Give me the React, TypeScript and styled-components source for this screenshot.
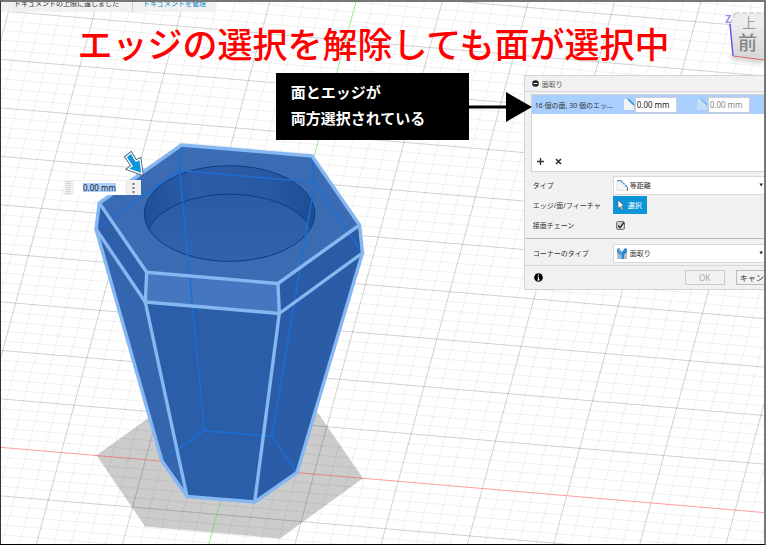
import React, { useState } from "react";
import styled, { createGlobalStyle } from "styled-components";

const CJK = `"Noto Sans", "Noto Sans CJK JP", sans-serif`;
const CJK_ONLY = `"Noto Sans CJK JP", sans-serif`;

const GlobalStyle = createGlobalStyle`
  *, *::before, *::after { box-sizing: border-box; }
  body { margin: 0; font-family: ${CJK}; font-size: 7px; color: #333; }
  button, input, select { font: inherit; color: inherit; margin: 0; }
`;

const Frame = styled.main`
  position: relative;
  min-height: 100vh;
  overflow: hidden;
  background: #fff;
  border: 2px solid #777;
  border-left: 1px solid #333;
  border-bottom: 1px solid #000;
`;

const Scene = styled.svg`
  position: absolute;
  inset: 0;
  width: 100%;
  height: 100%;
  display: block;
`;

const Content = styled.div`
  position: relative;
  display: flex;
  flex-direction: column;
`;

const NoticeBar = styled.div`
  display: flex;
  align-self: flex-start;
  height: 10px;
  background: #f1f1f1;
  overflow: hidden;
  line-height: 10px;
`;

const Notice = styled.span`
  display: block;
  margin-top: -3px;
  padding: 0 13px;
  border-right: 1px solid #ccc;
  white-space: nowrap;
`;

const NoticeLink = styled.a`
  display: block;
  margin-top: -3px;
  padding: 0 10px;
  color: #0a84c8;
  text-decoration: none;
  white-space: nowrap;
`;

const Headline = styled.h1`
  margin: 5px 18px 4px 0;
  font: 500 35px/52px ${CJK_ONLY};
  color: #f00;
  text-align: center;
  white-space: nowrap;
`;

const Row = styled.div`
  display: flex;
  align-items: flex-start;
  padding-left: 36%;
`;

const Callout = styled.p`
  flex: 0 0 193px;
  margin: 0;
  padding: 6px 15px 9px;
  background: #000;
  color: #fff;
  font: 700 15px/26px ${CJK_ONLY};
`;

const Pointer = styled.svg`
  flex: none;
  position: relative;
  z-index: 1;
  margin: 18px -8px 0 0;
`;

const Panel = styled.form`
  flex: 0 0 264px;
  margin-top: 2px;
  background: #f1f1f1;
  border: 1px solid #d4d4d4;
`;

const PanelHeader = styled.header`
  display: flex;
  align-items: center;
  gap: 3px;
  height: 16px;
  padding-left: 7px;
  border-bottom: 1px solid #d8d8d8;
  color: #555;
`;

const PanelTitle = styled.h2`
  margin: 0;
  font: inherit;
`;

const SelectionList = styled.div`
  display: flex;
  flex-direction: column;
  justify-content: space-between;
  height: 78px;
  margin: 2px 0 3px 6px;
  border: 1px solid #d4d4d4;
  background: #fff;
`;

const SelectionRow = styled.div`
  display: flex;
  align-items: center;
  height: 19px;
  padding-left: 3px;
  background: #a9cfff;
`;

const SelectionText = styled.span`
  flex: 0 0 88px;
  white-space: nowrap;
`;

const Distance = styled.label<{ $muted?: boolean }>`
  display: flex;
  align-items: center;
  flex: 0 0 73px;
  color: ${(p) => (p.$muted ? "#888" : "#222")};
  svg { opacity: ${(p) => (p.$muted ? 0.4 : 1)}; }
`;

const DistanceInput = styled.input`
  width: 42px;
  height: 16px;
  padding: 0 0 0 1px;
  border: 1px solid #cfcfcf;
  background: #fff;
  font-size: 8px;
`;

const ListTools = styled.div`
  display: flex;
  gap: 8px;
  padding: 0 4px 4px;
`;

const ToolButton = styled.button`
  display: grid;
  place-items: center;
  width: 10px;
  height: 11px;
  padding: 0;
  border: 0;
  background: none;
`;

const Field = styled.div`
  display: grid;
  grid-template-columns: 80px 1fr;
  align-items: center;
  height: 20px;
  padding-left: 8px;
`;

const FieldLabel = styled.label`
  white-space: nowrap;
`;

const Choice = styled.div`
  display: flex;
  align-items: center;
  width: 156px;
  height: 19px;
  padding: 0 4px 0 2px;
  border: 1px solid #d8d8d8;
  background: #fff;
`;

const ChoiceSelect = styled.select`
  flex: 1;
  height: 17px;
  padding: 0 0 0 2px;
  border: 0;
  outline: 0;
  appearance: none;
  background: none;
`;

const SelectButton = styled.button`
  display: flex;
  align-items: center;
  gap: 3px;
  width: 34px;
  height: 18px;
  padding: 0 4px;
  border: 0;
  background: #0c96d8;
  color: #fff;
`;

const TickBox = styled.span`
  display: grid;
  justify-content: start;
  align-items: center;
  > * { grid-area: 1 / 1; }
  svg { margin-left: 3px; pointer-events: none; }
`;

const Tick = styled.input`
  appearance: none;
  width: 9px;
  height: 9px;
  margin: 0 0 0 3px;
  border: 1px solid #777;
  border-radius: 2px;
  background: #d0d0d0;
`;

const Divider = styled.hr`
  margin: 3px 0 4px;
  border: 0;
  border-top: 1px solid #bbb;
`;

const PanelFooter = styled.footer`
  display: flex;
  align-items: center;
  gap: 11px;
  height: 24px;
  margin-top: 2px;
  padding-left: 9px;
  border-top: 1px solid #d8d8d8;
`;

const FooterButton = styled.button`
  flex: none;
  min-width: 40px;
  height: 15px;
  padding: 0 3px;
  border: 1px solid #bbb;
  background: #f1f1f1;
  font-size: 8px;
  line-height: 12px;
  white-space: nowrap;
  &:disabled { color: #aaa; border-color: #ccc; }
  &:first-of-type { margin-left: 131px; }
`;

const ValueEditor = styled.div`
  position: absolute;
  left: 63px;
  top: 178px;
  display: flex;
  align-items: center;
  height: 15px;
  background: #f0f0f0;
`;

const Grip = styled.span`
  width: 5px;
  height: 13px;
  margin: 0 3px 0 2px;
  background: repeating-linear-gradient(#d4d4d4 0 1px, #f0f0f0 1px 2px);
`;

const ValueBox = styled.span`
  display: flex;
  align-items: center;
  width: 51px;
  height: 14px;
  padding-left: 9px;
  background: #fff;
`;

const ValueInput = styled.input`
  width: 33px;
  height: 9px;
  padding: 0;
  border: 0;
  outline: 0;
  background: #a9cfff;
  color: #222;
  font-size: 8px;
  line-height: 9px;
`;

const MoreButton = styled.button`
  display: grid;
  place-items: center;
  width: 16px;
  height: 15px;
  padding: 0;
  border: 0;
  background: none;
`;

const ViewCube = styled.svg`
  position: absolute;
  top: 8px;
  right: 0;
`;

type Pt = [number, number];
const pts = (...list: Pt[]) => list.map((p) => p.join(",")).join(" ");

const SLOPE_H = 0.0854;
const SLOPE_V = -0.2715;

function Grid() {
  const lines: React.ReactElement[] = [];
  for (let i = -58; i <= 20; i++) {
    if (i === 0) continue;
    const y = 447.3 + i * 9.7;
    lines.push(
      <line key={`h${i}`} x1={0} y1={y} x2={1600} y2={y + 1600 * SLOPE_H}
        strokeOpacity={i % 5 === 0 ? 0.18 : 0.06} />
    );
  }
  for (let i = -22; i <= 90; i++) {
    if (i === 0) continue;
    const x = 356.5 + i * 17.24;
    lines.push(
      <line key={`v${i}`} x1={x} y1={0} x2={x + 800 * SLOPE_V} y2={800}
        strokeOpacity={i % 5 === 0 ? 0.18 : 0.06} />
    );
  }
  return (
    <g strokeWidth="1" stroke="#000">
      {lines}
      <line x1={0} y1={447.3} x2={1600} y2={447.3 + 1600 * SLOPE_H} stroke="#ff3b3b" strokeOpacity="0.5" />
      <line x1={356.5} y1={0} x2={356.5 + 800 * SLOPE_V} y2={800} stroke="#4fe04f" strokeOpacity="0.6" />
    </g>
  );
}

const A: Pt = [181.5, 145];
const B: Pt = [312, 156];
const C: Pt = [359.5, 225];
const D: Pt = [278, 283.5];
const E: Pt = [146.7, 272.3];
const F: Pt = [99.3, 203];
const C2: Pt = [362.5, 253];
const D2: Pt = [279.3, 313.5];
const E2: Pt = [145.3, 302];
const F2: Pt = [96, 229];
const A2: Pt = [179.7, 170.5];
const B2: Pt = [314.7, 182.3];
const a: Pt = [204.3, 430.7];
const b: Pt = [272, 436.3];
const c: Pt = [297, 472.5];
const d: Pt = [254.7, 502];
const e: Pt = [187, 496.5];
const f: Pt = [162, 461];

function Model() {
  return (
    <Scene viewBox="1 2 763 542" preserveAspectRatio="xMinYMin slice" aria-hidden="true">
      <defs>
        <linearGradient id="wall" x1="0" x2="1" y1="0" y2="0">
          <stop offset="0" stopColor="#1d4e97" />
          <stop offset="0.3" stopColor="#2d5da8" />
          <stop offset="0.7" stopColor="#2a59a3" />
          <stop offset="1" stopColor="#1c4c94" />
        </linearGradient>
        <linearGradient id="floor" x1="0" x2="0" y1="0" y2="1">
          <stop offset="0" stopColor="#2b5ba6" />
          <stop offset="1" stopColor="#3565b0" />
        </linearGradient>
        <clipPath id="hole">
          <ellipse cx="229.5" cy="213.5" rx="85.2" ry="47.8" />
        </clipPath>
      </defs>
      <polygon points={pts([96.5, 455.3], [145, 526.5], [280, 538.5], [363, 478.3], [317, 411.5], [300, 400], [175, 399])} fill="#ccc" />
      <Grid />
      <g>
        <polygon points={pts(A, B, C, D, E, F)} fill="#3a6bb3" />
        <polygon points={pts(F, E, E2, F2)} fill="#2f5fa9" />
        <polygon points={pts(E, D, D2, E2)} fill="#4576c0" />
        <polygon points={pts(D, C, C2, D2)} fill="#2b5ba6" />
        <polygon points={pts(F2, E2, e, f)} fill="#3465af" />
        <polygon points={pts(E2, D2, d, e)} fill="#2b5ea9" />
        <polygon points={pts(D2, C2, c, d)} fill="#2a5ca7" />
      </g>
      <g clipPath="url(#hole)">
        <rect x="140" y="160" width="180" height="105" fill="url(#wall)" />
        <ellipse cx="230" cy="240.5" rx="84" ry="46.3" fill="url(#floor)" stroke="#123b7d" />
      </g>
      <ellipse cx="229.5" cy="213.5" rx="85.2" ry="47.8" fill="none" stroke="#123b7d" />
      <g fill="none" stroke="#1a6fd6" strokeWidth="1.4">
        <polyline points={pts(A, A2, a)} />
        <polyline points={pts(B, B2, b)} />
        <polyline points={pts(F2, A2, B2, C2)} />
        <polyline points={pts(f, a, b, c)} />
      </g>
      <g fill="none" stroke="#86b7f0" strokeWidth="3.4" strokeLinejoin="round" strokeLinecap="round">
        <polygon points={pts(A, B, C, C2, c, d, e, f, F2, F)} />
        <polyline points={pts(F, E, D, C)} />
        <polyline points={pts(F2, E2, D2, C2)} />
        <polyline points={pts(E, E2, e)} />
        <polyline points={pts(D, D2, d)} />
      </g>
      <path d="M126 157l5-4 5 8 4-2 2 15-14-5 4-3z" fill="#0d96dc" stroke="#34516f" strokeWidth="3" />
      <path d="M126 157l5-4 5 8 4-2 2 15-14-5 4-3z" fill="#0d96dc" stroke="#fff" strokeWidth="1.4" />
    </Scene>
  );
}

const BevelIcon = () => (
  <svg width="12" height="13" viewBox="0 0 12 13" aria-hidden="true">
    <path d="M1 1h5l5 6v5H1z" fill="#f3f3f3" />
    <path d="M5 1l6 6" stroke="#2b8fe0" strokeWidth="1.5" />
  </svg>
);

const DistanceIcon = () => (
  <svg width="12" height="13" viewBox="0 0 12 13" aria-hidden="true">
    <path d="M1 2v9.5h10V7.5L5 2z" fill="#f6f6f6" stroke="#e0e0e0" />
    <path d="M1 1.5h4M11.500 8v4" stroke="#777" />
    <path d="M5 2l6 6" stroke="#2b8fe0" strokeWidth="1.4" strokeDasharray="2 1" />
  </svg>
);

const CornerIcon = () => (
  <svg width="12" height="13" viewBox="0 0 12 13" aria-hidden="true">
    <path d="M1 5l3 3v4H1zM11 5L8 8v4h3z" fill="#bdbdbd" />
    <path d="M1 2l2-1 3 4 3-4 2 1v3L8 8v4H4V8L1 5z" fill="#2d86c8" />
    <path d="M1 2l2-1 3 4-1 2zM4 7h2v5H4z" fill="#6ab5e8" />
  </svg>
);

const Caret = () => (
  <svg width="5" height="4" viewBox="0 0 5 4" aria-hidden="true">
    <path d="M0.500 0.500h3.500L2.200 3.500z" fill="#222" />
  </svg>
);

export default function App() {
  const [tangent, setTangent] = useState(true);
  return (
    <>
      <GlobalStyle />
      <Frame>
        <Model />
        <Content>
          <NoticeBar>
            <Notice>ドキュメントの上限に達しました</Notice>
            <NoticeLink href="#documents">ドキュメントを管理</NoticeLink>
          </NoticeBar>
          <Headline>エッジの選択を解除しても面が選択中</Headline>
          <Row>
            <Callout>
              面とエッジが
              <br />
              両方選択されている
            </Callout>
            <Pointer width="63" height="32" viewBox="0 0 63 32" aria-hidden="true">
              <path d="M0 16h40" stroke="#000" strokeWidth="3" />
              <path d="M37 1l26 15-26 15z" />
            </Pointer>
            <Panel onSubmit={(ev) => ev.preventDefault()}>
              <PanelHeader>
                <svg width="7" height="7" viewBox="0 0 7 7" aria-hidden="true">
                  <circle cx="3.5" cy="3.5" r="3.3" fill="#222" />
                  <path d="M1.500 3.500h4" stroke="#fff" />
                </svg>
                <PanelTitle>面取り</PanelTitle>
              </PanelHeader>
              <SelectionList>
                <SelectionRow>
                  <SelectionText>16 個の面, 30 個のエッ...</SelectionText>
                  <Distance>
                    <BevelIcon />
                    <DistanceInput aria-label="距離 1" defaultValue="0.00 mm" />
                  </Distance>
                  <Distance $muted>
                    <BevelIcon />
                    <DistanceInput aria-label="距離 2" defaultValue="0.00 mm" readOnly />
                  </Distance>
                </SelectionRow>
                <ListTools>
                  <ToolButton type="button" aria-label="追加">
                    <svg width="7" height="7" viewBox="0 0 7 7"><path d="M3.500 0v7M0 3.500h7" stroke="#333" strokeWidth="1.4" /></svg>
                  </ToolButton>
                  <ToolButton type="button" aria-label="削除">
                    <svg width="7" height="7" viewBox="0 0 7 7"><path d="M1 1l5 5M6 1L1 6" stroke="#333" strokeWidth="1.6" /></svg>
                  </ToolButton>
                </ListTools>
              </SelectionList>
              <Field>
                <FieldLabel htmlFor="type">タイプ</FieldLabel>
                <Choice>
                  <DistanceIcon />
                  <ChoiceSelect id="type"><option>等距離</option></ChoiceSelect>
                  <Caret />
                </Choice>
              </Field>
              <Field>
                <FieldLabel htmlFor="pick">エッジ/面/フィーチャ</FieldLabel>
                <SelectButton id="pick" type="button">
                  <svg width="8" height="10" viewBox="0 0 8 10" aria-hidden="true">
                    <path d="M1 0l6 6H4.500L6 9l-1.500.700L3.200 6.800 1 8.500z" fill="#fff" stroke="#555" strokeWidth=".6" />
                  </svg>
                  選択
                </SelectButton>
              </Field>
              <Field>
                <FieldLabel htmlFor="tangent">接面チェーン</FieldLabel>
                <TickBox>
                  <Tick id="tangent" type="checkbox" checked={tangent} onChange={(ev) => setTangent(ev.target.checked)} />
                  {tangent && (
                    <svg width="9" height="9" viewBox="0 0 9 9" aria-hidden="true">
                      <path d="M2 4.500l2 2.300L7.800 1.500" fill="none" stroke="#222" strokeWidth="1.3" />
                    </svg>
                  )}
                </TickBox>
              </Field>
              <Divider />
              <Field>
                <FieldLabel htmlFor="corner">コーナーのタイプ</FieldLabel>
                <Choice>
                  <CornerIcon />
                  <ChoiceSelect id="corner"><option>面取り</option></ChoiceSelect>
                  <Caret />
                </Choice>
              </Field>
              <PanelFooter>
                <svg width="9" height="9" viewBox="0 0 9 9" aria-hidden="true">
                  <circle cx="4.5" cy="4.5" r="4.3" fill="#000" />
                  <path d="M4.500 1.500v1.300M3.500 4h1v3M3.300 7h2.600" stroke="#fff" fill="none" />
                </svg>
                <FooterButton type="submit" disabled>OK</FooterButton>
                <FooterButton type="button">キャンセル</FooterButton>
              </PanelFooter>
            </Panel>
          </Row>
        </Content>
        <ValueEditor>
          <Grip />
          <ValueBox>
            <ValueInput aria-label="面取り距離" defaultValue="0.00 mm" />
          </ValueBox>
          <MoreButton type="button" aria-label="その他">
            <svg width="3" height="10" viewBox="0 0 3 10" fill="#777">
              <rect x=".5" y="0" width="2" height="2" />
              <rect x=".5" y="4" width="2" height="2" />
              <rect x=".5" y="8" width="2" height="2" />
            </svg>
          </MoreButton>
        </ValueEditor>
        <ViewCube width="42" height="56" viewBox="722 10 42 56" fontFamily="Noto Sans CJK JP, sans-serif" role="img" aria-label="ビューキューブ">
          <defs>
            <linearGradient id="face" x1="0" x2="0" y1="0" y2="1">
              <stop offset="0" stopColor="#ececec" />
              <stop offset="1" stopColor="#d6d6d6" />
            </linearGradient>
            <filter id="soft"><feGaussianBlur stdDeviation="2" /></filter>
          </defs>
          <path d="M730 54l34 4v6l-32-4z" fill="#aaa" opacity=".5" filter="url(#soft)" />
          <path d="M735 13h29v14l-34-3z" fill="#eee" />
          <path d="M730 24l34 3v33l-31-4z" fill="url(#face)" />
          <path d="M735 13h29M735 13l-5 11" fill="none" stroke="#bbb" strokeDasharray="5 2" />
          <path d="M730 24l3 32" stroke="#5a5ae6" strokeWidth="1.5" />
          <path d="M733 56l31 4" stroke="#e06a6a" />
          <text x="742" y="28" fontSize="14" fill="#9a9a9a">上</text>
          <text x="738" y="50" fontSize="19" fontWeight="500" fill="#858585">前</text>
          <text x="725" y="23" fontSize="10" fontWeight="700" fill="#8c8cf4">Z</text>
        </ViewCube>
      </Frame>
    </>
  );
}
